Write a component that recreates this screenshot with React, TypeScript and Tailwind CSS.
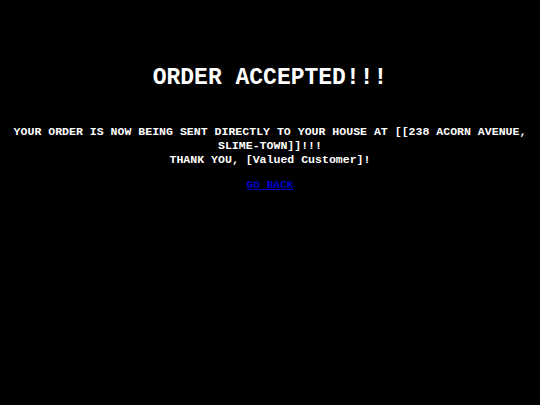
export default function App() {
    return (
        <div className="min-h-[405px] w-[540px] bg-black text-white font-['Liberation_Mono',monospace] font-bold flex flex-col items-center text-center pt-[64px]">
            <h1 className="text-[23px] leading-[28px]">ORDER ACCEPTED!!!</h1>
            <p className="mt-[33px] text-[11.55px] leading-[14px] px-[10px]">
                YOUR ORDER IS NOW BEING SENT DIRECTLY TO YOUR HOUSE AT [[238 ACORN AVENUE, SLIME-TOWN]]!!!
                <br />
                THANK YOU, [Valued Customer]!
            </p>
            <a href="#" className="mt-[11px] text-[11.2px] leading-[14px] text-[#0000c8] underline">
                GO BACK
            </a>
        </div>
    )
}
